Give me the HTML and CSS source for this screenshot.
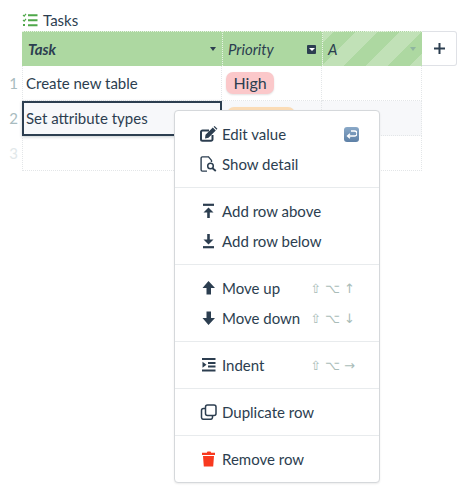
FILE: index.html
```html
<!DOCTYPE html>
<html lang="en">
<head>
  <meta charset="UTF-8" />
  <title>Tasks</title>
  <link rel="stylesheet" href="styles.css">
</head>
<body>
  <div class="title">
    <svg class="title-icon" width="16" height="14" viewBox="0 0 16 14">
      <path d="M1 2l1.200 1.200L4 .8M1 7l1.200 1.200L4 5.800" fill="none" stroke="#4fa84a" stroke-width="1.100"/>
      <rect x="1" y="11" width="2" height="2" fill="#4fa84a"/>
      <path d="M6 2.300h9.500M6 7.300h9.500M6 12.200h9.500" stroke="#4fa84a" stroke-width="2"/>
    </svg>
    <span>Tasks</span>
  </div>

  <div class="sheet">
    <div class="head-row">
      <div class="head-cell task-head"><b>Task</b><span class="caret"></span></div>
      <div class="head-cell"><i>Priority</i><span class="caret-box"></span></div>
      <div class="head-cell striped"><i>A</i><span class="caret faint"></span></div>
      <div class="add-col">
        <svg width="13" height="13" viewBox="0 0 13 13"><path d="M6.500 1v11M1 6.500h11" stroke="#2c3e50" stroke-width="2"/></svg>
      </div>
    </div>

    <div class="row">
      <div class="num">1</div>
      <div class="cell task-cell">Create new table</div>
      <div class="cell"><span class="pill high">High</span></div>
      <div class="cell"></div>
    </div>
    <div class="row active">
      <div class="num">2</div>
      <div class="cell task-cell selected">Set attribute types</div>
      <div class="cell"><span class="pill medium"></span></div>
      <div class="cell"></div>
    </div>
    <div class="row">
      <div class="num faint-num">3</div>
      <div class="cell task-cell"></div>
      <div class="cell"></div>
      <div class="cell"></div>
    </div>
  </div>

  <div class="menu">
    <div class="menu-group">
      <div class="item">
        <svg class="icon" width="18" height="16" viewBox="0 0 18 16"><path d="M12.500 9v4.300a1.500 1.500 0 0 1-1.500 1.500H2.500A1.500 1.500 0 0 1 1 13.300V6a1.500 1.500 0 0 1 1.500-1.500H9" fill="none" stroke="#2c3e50" stroke-width="2"/><path d="M5.500 8.800L12.800 1.500l3 3-7.300 7.300-3.500.6zM13.600.7l1-.7 2.800 2.800-.8 1z" fill="#2c3e50"/></svg>
        <span>Edit value</span>
        <span class="enter-key"><svg width="11" height="9" viewBox="0 0 11 9"><path d="M5 1h3.500a2.500 2.500 0 0 1 0 5H2M4 3.800L1.500 6 4 8.200" fill="none" stroke="#fff" stroke-width="1.300"/></svg></span>
      </div>
      <div class="item">
        <svg class="icon" width="18" height="16" viewBox="0 0 18 16"><path d="M9 .9H2.400A1.300 1.300 0 0 0 1.100 2.200v11.600a1.300 1.300 0 0 0 1.300 1.300H7M8.500.9l3 3.500V6" fill="none" stroke="#2c3e50" stroke-width="1.400"/><circle cx="10.500" cy="10" r="2.800" fill="none" stroke="#2c3e50" stroke-width="1.500"/><path d="M12.500 12.200l3.300 2.800" stroke="#2c3e50" stroke-width="1.800"/></svg>
        <span>Show detail</span>
      </div>
    </div>
    <div class="menu-group">
      <div class="item">
        <svg class="icon" width="18" height="16" viewBox="0 0 18 16"><path d="M3 1.800h11" stroke="#2c3e50" stroke-width="2.200"/><path d="M8.500 15V8" stroke="#2c3e50" stroke-width="2.600"/><path d="M3.500 9.500L8.500 4.500l5 5z" fill="#2c3e50"/></svg>
        <span>Add row above</span>
      </div>
      <div class="item">
        <svg class="icon" width="18" height="16" viewBox="0 0 18 16"><path d="M3 14.200h11" stroke="#2c3e50" stroke-width="2.200"/><path d="M8.500 1v7" stroke="#2c3e50" stroke-width="2.600"/><path d="M3.500 6.500l5 5 5-5z" fill="#2c3e50"/></svg>
        <span>Add row below</span>
      </div>
    </div>
    <div class="menu-group">
      <div class="item">
        <svg class="icon" width="18" height="16" viewBox="0 0 18 16"><path d="M8.500 1L15 8h-4v6.500H6.500V8H2.500z" fill="#2c3e50"/></svg>
        <span>Move up</span>
        <span class="keys"><span>⇧</span><span>⌥</span><span>↑</span></span>
      </div>
      <div class="item">
        <svg class="icon" width="18" height="16" viewBox="0 0 18 16"><path d="M8.500 15L15 8h-4V1.500H6.500V8H2.500z" fill="#2c3e50"/></svg>
        <span>Move down</span>
        <span class="keys"><span>⇧</span><span>⌥</span><span>↓</span></span>
      </div>
    </div>
    <div class="menu-group">
      <div class="item">
        <svg class="icon" width="18" height="16" viewBox="0 0 18 16"><path d="M2 2h13.500M8 6h7.500M8 9.500h7.500M2 13.500h13.500" stroke="#2c3e50" stroke-width="2"/><path d="M2.500 4.800L6.500 7.800 2.500 10.800z" fill="#2c3e50"/></svg>
        <span>Indent</span>
        <span class="keys"><span>⇧</span><span>⌥</span><span>→</span></span>
      </div>
    </div>
    <div class="menu-group">
      <div class="item">
        <svg class="icon" width="18" height="16" viewBox="0 0 18 16"><rect x="5.500" y="1" width="10.500" height="10.500" rx="2" fill="none" stroke="#2c3e50" stroke-width="1.500"/><path d="M5 4.500H3.500A2 2 0 0 0 1.500 6.500v7a2 2 0 0 0 2 1.800h7a2 2 0 0 0 2-1.800V12" fill="none" stroke="#2c3e50" stroke-width="1.500"/></svg>
        <span>Duplicate row</span>
      </div>
    </div>
    <div class="menu-group">
      <div class="item">
        <svg class="icon" width="18" height="16" viewBox="0 0 18 16"><path d="M2 1.800h4.800l.7-1.300h3l.7 1.300H15v2.200H2zM3 5h11l-.8 10.500H3.800z" fill="#f8391f"/></svg>
        <span>Remove row</span>
      </div>
    </div>
  </div>
</body>
</html>
```

FILE: styles.css
```css
* {
  box-sizing: border-box;
}

body {
  margin: 0;
  padding-top: 9px;
  font-family: Lato, sans-serif;
  font-size: 15px;
  color: #2c3e50;
  background: white;
}

.title {
  display: flex;
  align-items: center;
  gap: 5px;
  height: 22px;
  padding-left: 22px;
  font-size: 15px;
}

.sheet {
  width: 457px;
}

.head-row {
  display: flex;
  height: 35px;
  margin-left: 22px;
}

.head-cell {
  display: flex;
  align-items: center;
  justify-content: space-between;
  width: 100px;
  padding: 0 5px;
  background: #add8a1;
  border-left: 1px dotted #e8f3e5;
  border-top: 1px dotted #e8f3e5;
  font-size: 15px;
}

.task-head {
  width: 200px;
  border-left: none;
  padding-left: 6px;
}

.task-head b {
  font-style: italic;
}

.striped {
  background: repeating-linear-gradient(135deg, #c1e1b7 0, #c1e1b7 7.500px, #add8a1 7.500px, #add8a1 23px, #c1e1b7 23px, #c1e1b7 31px);
}

.caret {
  width: 0;
  height: 0;
  border-left: 3.500px solid transparent;
  border-right: 3.500px solid transparent;
  border-top: 4px solid #2c3e50;
  margin-right: 1px;
}

.caret.faint {
  border-top-color: #8fb5a0;
}

.caret-box {
  position: relative;
  width: 9px;
  height: 9px;
  margin-right: 1px;
  background: #2c3e50;
  border-radius: 1px;
}

.caret-box::after {
  content: "";
  position: absolute;
  left: 1.500px;
  top: 3px;
  border-left: 3px solid transparent;
  border-right: 3px solid transparent;
  border-top: 3.500px solid white;
}

.add-col {
  display: flex;
  align-items: center;
  justify-content: center;
  width: 35px;
  background: white;
  border: 1px solid #dfe1e6;
  border-left: none;
  border-radius: 0 3px 3px 0;
}

.row {
  display: flex;
  height: 35px;
}

.num {
  width: 22px;
  padding-right: 4px;
  line-height: 35px;
  text-align: right;
  font-size: 15px;
  color: #a9bcc0;
}

.faint-num {
  color: #e2e8ea;
}

.cell {
  display: flex;
  align-items: center;
  width: 100px;
  padding: 0 4px;
  border-right: 1px dotted #e3e6e8;
  border-bottom: 1px dotted #e3e6e8;
}

.task-cell {
  width: 200px;
  border-left: 1px dotted #e3e6e8;
  padding-left: 3px;
}

.row.active .cell {
  background: #f7f8fa;
}

.cell.selected {
  border: 2px solid #2c3e50;
  padding: 0 4px 2px 2px;
  box-shadow: 0 1px 3px rgba(44, 62, 80, 0.25);
}

.pill {
  display: block;
  padding: 0 7.500px;
  height: 22px;
  line-height: 22px;
  border-radius: 7px;
  box-shadow: 0 1px 2px rgba(0, 0, 0, 0.12);
}

.high {
  background: #fbc8ca;
  font-size: 16px;
}

.medium {
  width: 68px;
  margin-left: 1px;
  background: #fbdcb6;
}

.menu {
  position: absolute;
  left: 174px;
  top: 110px;
  width: 206px;
  background: white;
  border: 1px solid #d5d8db;
  border-radius: 4px;
  box-shadow: 0 1px 2px rgba(0, 0, 0, 0.08);
}

.menu-group {
  padding: 8px 0;
  border-top: 1px solid #e8ebed;
}

.menu-group:first-child {
  border-top: none;
}

.item {
  display: flex;
  align-items: center;
  height: 30px;
  padding: 0 24px 0 25px;
  font-size: 15px;
}

.icon {
  flex: none;
  margin-right: 4px;
}

.enter-key {
  display: flex;
  align-items: center;
  justify-content: center;
  width: 15px;
  height: 15px;
  margin-left: auto;
  margin-right: -4px;
  background: linear-gradient(#8aa9c8, #5d80a6);
  border-radius: 3px;
}

.keys {
  display: flex;
  gap: 4px;
  margin-left: auto;
  font-family: "DejaVu Sans", sans-serif;
  font-size: 13px;
  color: #a9bcb8;
  white-space: nowrap;
}
```
